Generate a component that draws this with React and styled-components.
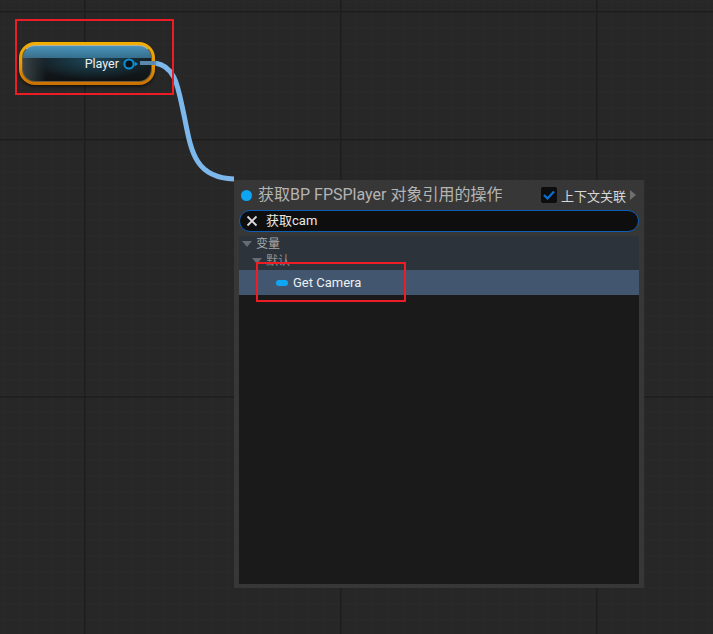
import React from "react";
import styled, { createGlobalStyle } from "styled-components";

const Global = createGlobalStyle`
  html, body { margin: 0; padding: 0; background: #272727; }
  body { font-family: "Roboto", "Noto Sans CJK SC", sans-serif; }
`;

const Canvas = styled.div`
  position: relative;
  width: 713px;
  height: 634px;
  overflow: hidden;
  background-color: #272727;
  background-image:
    linear-gradient(#1d1d1d, #1d1d1d),
    linear-gradient(#1d1d1d, #1d1d1d),
    linear-gradient(#1d1d1d, #1d1d1d),
    linear-gradient(#1d1d1d, #1d1d1d),
    linear-gradient(#1d1d1d, #1d1d1d),
    linear-gradient(#1d1d1d, #1d1d1d),
    repeating-linear-gradient(90deg, #2a2a2a 0 1px, transparent 1px 16px),
    repeating-linear-gradient(180deg, #2a2a2a 0 1px, transparent 1px 16px);
  background-size: 1.5px 100%, 1.5px 100%, 1.5px 100%, 100% 1.5px, 100% 1.5px, 100% 1.5px, auto, auto;
  background-position: 84px 0, 340px 0, 596px 0, 0 11px, 0 139px, 0 396px, 4px 0, 0 11px;
  background-repeat: no-repeat, no-repeat, no-repeat, no-repeat, no-repeat, no-repeat, repeat, repeat;
`;

const Wire = styled.svg`
  position: absolute;
  left: 0;
  top: 0;
  pointer-events: none;
`;

const Node = styled.div`
  position: absolute;
  left: 19px;
  top: 42px;
  width: 136px;
  height: 43px;
  box-sizing: border-box;
  border-radius: 16px;
  padding: 3px;
  background: linear-gradient(180deg, #f3b000 0%, #e59a06 50%, #c96f00 100%);
  box-shadow: 0 2px 3px rgba(0, 0, 0, 0.5);
`;

const NodeInner = styled.div`
  height: 100%;
  box-sizing: border-box;
  border-radius: 13px;
  border: 1px solid #6d5a36;
  border-top-color: #b9b2a0;
  overflow: hidden;
  background:
    linear-gradient(180deg, rgba(75, 160, 205, 0.85) 0%, rgba(60, 125, 160, 0.75) 34%, rgba(0, 0, 0, 0) 35%),
    radial-gradient(ellipse 60px 20px at 55% 40%, rgba(30, 85, 110, 0.75) 0%, rgba(20, 40, 50, 0) 100%),
    linear-gradient(90deg, #3a4448 0%, rgba(58, 68, 72, 0) 18%),
    linear-gradient(180deg, #3f4a4e 0%, #2a3a42 34%, #151e22 35%, #131a1d 70%, #0f1214 100%);
  display: flex;
  align-items: center;
  justify-content: flex-end;
  padding-right: 16px;
  gap: 4px;
`;

const NodeLabel = styled.span`
  color: #eef0f0;
  font-size: 12.5px;
  line-height: 14px;
`;

const Pin = styled.svg`
  flex: none;
  margin-right: -3px;
`;

const Panel = styled.section`
  position: absolute;
  left: 234px;
  top: 180px;
  width: 410px;
  height: 408px;
  box-sizing: border-box;
  background: #373737;
  padding: 0 5px 4px;
  display: flex;
  flex-direction: column;
`;

const TitleRow = styled.header`
  height: 30px;
  flex: none;
  display: flex;
  align-items: center;
  padding: 0 3px 0 2px;
`;

const Dot = styled.span`
  width: 11px;
  height: 11px;
  border-radius: 50%;
  background: #0ea5f5;
  flex: none;
  margin-right: 6px;
`;

const Title = styled.h1`
  flex: 1;
  margin: 0;
  color: #b4b4b4;
  font-size: 16px;
  font-weight: 400;
  line-height: 20px;
  white-space: nowrap;
`;

const Check = styled.span`
  width: 16px;
  height: 16px;
  border-radius: 2px;
  background: #0d0d0d;
  display: flex;
  align-items: center;
  justify-content: center;
  margin-right: 4px;
`;

const ContextLabel = styled.span`
  color: #d6d6d6;
  font-size: 13px;
  white-space: nowrap;
  margin-right: 4px;
`;

const Caret = styled.span`
  width: 0;
  height: 0;
  border-left: 6px solid #6f6f6f;
  border-top: 5px solid transparent;
  border-bottom: 5px solid transparent;
`;

const Search = styled.div`
  height: 22px;
  flex: none;
  box-sizing: border-box;
  border: 1px solid #0d5fb5;
  border-radius: 11px;
  background: #0e0e0e;
  display: flex;
  align-items: center;
  padding-left: 6px;
  gap: 8px;
`;

const SearchText = styled.span`
  color: #e8e8e8;
  font-size: 13px;
  line-height: 16px;
`;

const List = styled.div`
  flex: 1;
  margin-top: 4px;
  background: #1a1a1a;
  display: flex;
  flex-direction: column;
`;

const CategoryRow = styled.div`
  height: ${(p) => p.$h}px;
  flex: none;
  display: flex;
  align-items: center;
  background: #2c333b;
  padding-left: ${(p) => p.$indent}px;
  gap: 4px;
  color: ${(p) => (p.$dim ? "#8f8f8f" : "#a8a8a8")};
  font-size: 12px;
  line-height: 14px;
`;

const DownCaret = styled.span`
  width: 0;
  height: 0;
  border-top: 6px solid #666c72;
  border-left: 5.5px solid transparent;
  border-right: 5.5px solid transparent;
`;

const ActionRow = styled.div`
  height: 25px;
  flex: none;
  display: flex;
  align-items: center;
  background: #42576f;
  padding-left: 37px;
  gap: 5px;
  color: #eef0f2;
  font-size: 13px;
`;

const Pill = styled.span`
  width: 12px;
  height: 6px;
  border-radius: 3px;
  background: #0ea5f5;
`;

const RedBox = styled.div`
  position: absolute;
  box-sizing: border-box;
  border: 2px solid #ee1c25;
  left: ${(p) => p.$x}px;
  top: ${(p) => p.$y}px;
  width: ${(p) => p.$w}px;
  height: ${(p) => p.$h}px;
`;

export default function App() {
  return (
    <Canvas>
      <Global />
      <Wire width="713" height="634" viewBox="0 0 713 634">
        <path
          d="M155 63 C176 66 178 88 184 115 C191 150 194 178 234 179"
          fill="none"
          stroke="#7db8ec"
          strokeWidth="5"
        />
      </Wire>
      <Node>
        <NodeInner>
          <NodeLabel>Player</NodeLabel>
          <Pin width="15" height="12" viewBox="0 0 15 12">
            <circle cx="6" cy="6" r="4.6" fill="#0b1216" stroke="#0b8fd6" strokeWidth="2" />
            <path d="M11.5 3.5 L15 6 L11.5 8.5 Z" fill="#0b8fd6" />
          </Pin>
        </NodeInner>
      </Node>
      <Wire width="713" height="634" viewBox="0 0 713 634">
        <path d="M140 63 L155 63" fill="none" stroke="#5c88ad" strokeWidth="4" />
      </Wire>
      <Panel>
        <TitleRow>
          <Dot />
          <Title>获取BP FPSPlayer 对象引用的操作</Title>
          <Check>
            <svg width="12" height="10" viewBox="0 0 12 10">
              <path d="M1 5 L4.5 8.5 L11 1.5" fill="none" stroke="#0a70d8" strokeWidth="2.2" />
            </svg>
          </Check>
          <ContextLabel>上下文关联</ContextLabel>
          <Caret />
        </TitleRow>
        <Search>
          <svg width="12" height="12" viewBox="0 0 12 12">
            <path d="M1.5 1.5 L10.5 10.5 M10.5 1.5 L1.5 10.5" stroke="#dcdcdc" strokeWidth="1.8" />
          </svg>
          <SearchText>获取cam</SearchText>
        </Search>
        <List>
          <CategoryRow $indent={3} $h={15}>
            <DownCaret />
            变量
          </CategoryRow>
          <CategoryRow $indent={13} $h={19} $dim>
            <DownCaret />
            默认
          </CategoryRow>
          <ActionRow>
            <Pill />
            Get Camera
          </ActionRow>
        </List>
      </Panel>
      <RedBox $x={15} $y={19} $w={159} $h={76} />
      <RedBox $x={256} $y={262} $w={150} $h={40} />
    </Canvas>
  );
}
